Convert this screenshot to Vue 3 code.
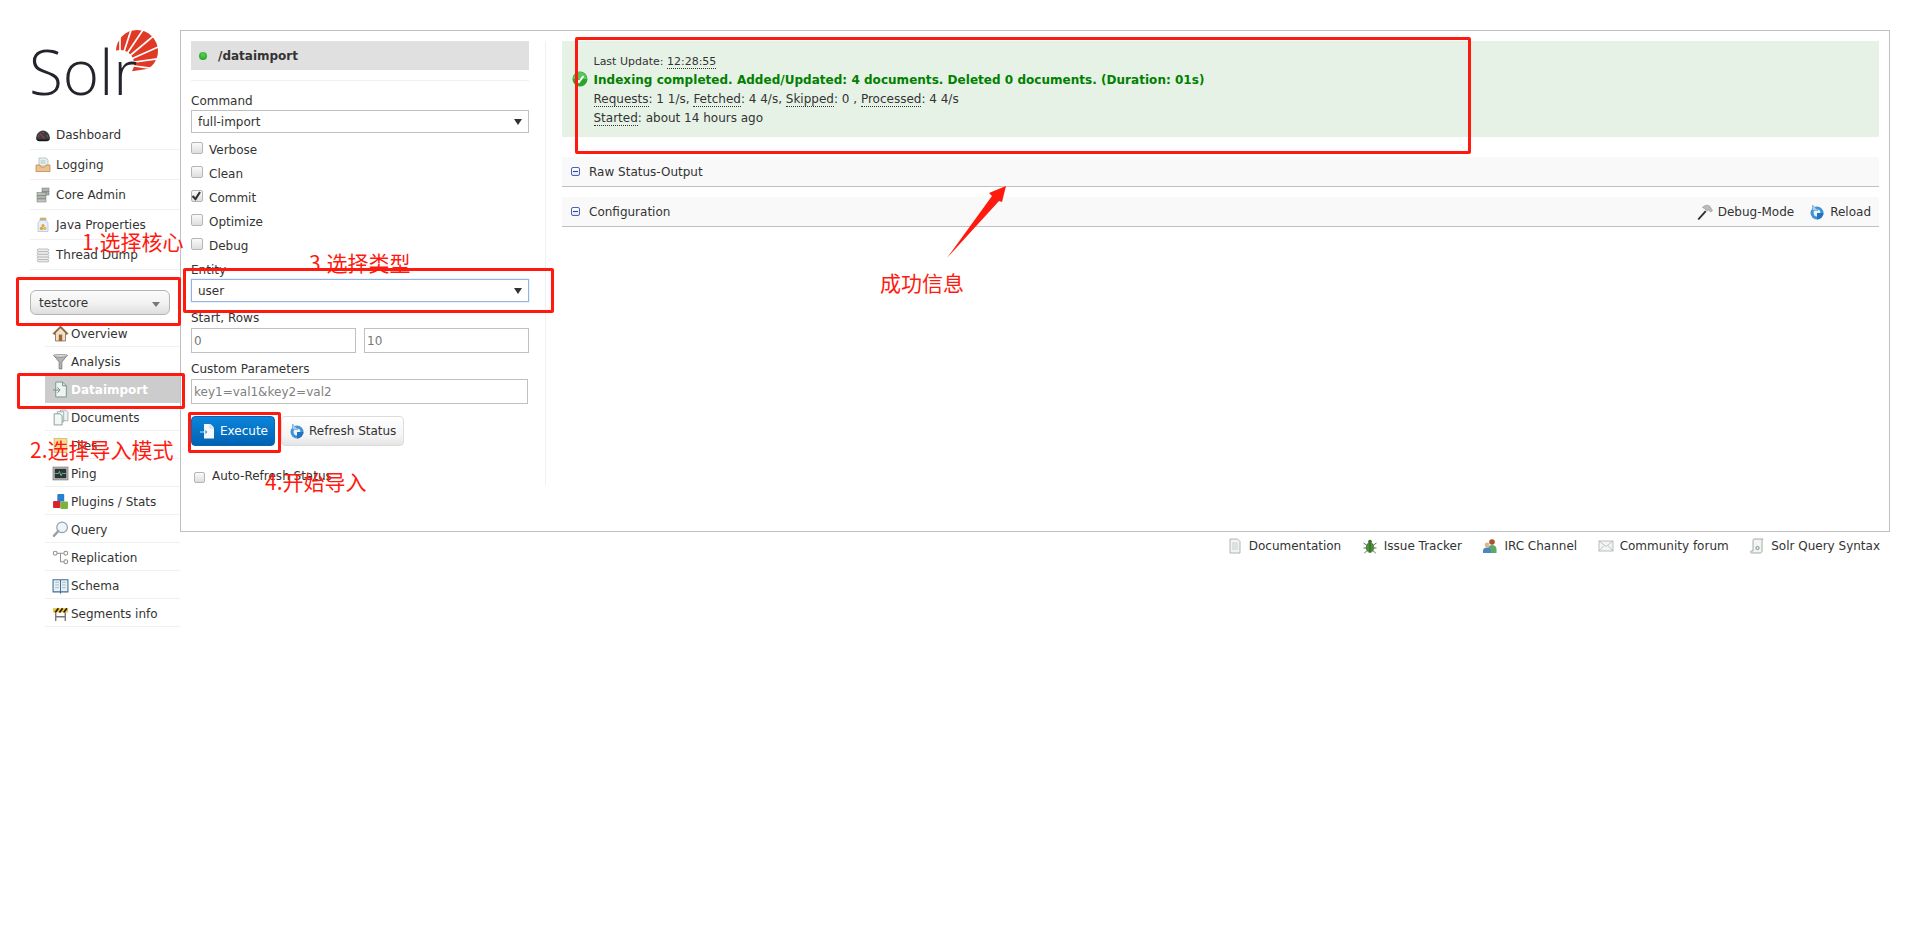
<script setup>
const icons = {
  dashboard: '<path d="M1 12.500C1 7 4 3.500 8 3.500s7 3.500 7 9l-2 1H3z" fill="#3a3d42"/><path d="M2 12.500h12v1l-2 .8H4l-2-.8z" fill="#17181b"/><path d="M4.500 6l5 5.500" stroke="#d8342c" stroke-width="1.100"/><path d="M3.200 9h1.200M8 5v1M12 9h1" stroke="#8d9096" stroke-width=".8"/>',
  logging: '<path d="M4 1h7l2 2v6H4z" fill="#e8f1ee" stroke="#9eb1ad" stroke-width=".7"/><path d="M5.500 4h5M5.500 6h5" stroke="#9db7b0" stroke-width=".8"/><path d="M1 8h4l1 2h4l1-2h4v6.500H1z" fill="#eec08c" stroke="#bd8a56" stroke-width=".8"/>',
  core: '<rect x="7" y="1" width="7" height="3.400" fill="#aab4ac" stroke="#70766f" stroke-width=".5"/><rect x="7" y="4.600" width="7" height="3.400" fill="#a0aca4" stroke="#70766f" stroke-width=".5"/><rect x="2" y="5.500" width="9" height="3" fill="#b9bfb8" stroke="#6f746e" stroke-width=".5"/><rect x="2" y="8.700" width="9" height="3" fill="#aeb5ae" stroke="#6f746e" stroke-width=".5"/><rect x="2" y="12" width="9" height="3" fill="#c0c5bf" stroke="#6f746e" stroke-width=".5"/>',
  java: '<rect x="5" y="1" width="6" height="2" rx=".6" fill="#e0b978" stroke="#b28a4a" stroke-width=".5"/><path d="M4.500 3.500h7L13 6v8.500H3V6z" fill="#e7f0f6" stroke="#a8c0d2" stroke-width=".7"/><circle cx="8" cy="8.600" r="1.600" fill="#dcaa4e"/><circle cx="6.400" cy="11.400" r="1.700" fill="#d9a446"/><circle cx="9.700" cy="11.400" r="1.700" fill="#e3b45e"/>',
  thread: '<path d="M3 2h10l1 1.200-1 1.400 1 1.300-1 1.400 1 1.300-1 1.400 1 1.300-1 1.400 1 1.300-1 .9H3l-1-1 1-1.300-1-1.300 1-1.400-1-1.300 1-1.400-1-1.300 1-1.400-1-1.300z" fill="#eceeec" stroke="#a3a7a3" stroke-width=".7"/><path d="M3 4.600h10M3 7.300h10M3 10h10M3 12.600h10" stroke="#a3a7a3" stroke-width=".8"/>',
  overview: '<path d="M8 1L1 8l1 1 1.300-1.200V15h9.400V7.800L14 9l1-1z" fill="#efe1c9" stroke="#8c6d4e" stroke-width=".8"/><path d="M8 1L1 8l1 1 6-6 6 6 1-1z" fill="#8e5a3a"/><rect x="6.400" y="9" width="3.200" height="6" fill="#a1652f"/>',
  analysis: '<path d="M1.500 2h13L9.300 8.500V15H6.700V8.500z" fill="#b0b3b0" stroke="#6f726f" stroke-width=".7"/><ellipse cx="8" cy="2.600" rx="6.500" ry="1.200" fill="#dcdedc" stroke="#777" stroke-width=".5"/>',
  dataimport: '<path d="M3.500 1h6.500L13.500 4.500V15H3.500z" fill="#edf3f1" stroke="#6f8b87" stroke-width=".8"/><path d="M1 8.500h6M5 6l2.600 2.500L5 11M10 1v3.500h3.500" fill="none" stroke="#6f8b87" stroke-width=".9"/>',
  documents: '<path d="M8 1h5l2 2v8H8z" fill="#eef3f2" stroke="#8aa09c" stroke-width=".7"/><path d="M5 2.500h6v9.500H5z" fill="#eef3f2" stroke="#8aa09c" stroke-width=".7"/><path d="M2 4.500h5.500l2 2V15H2z" fill="#f4f7f6" stroke="#7d9490" stroke-width=".8"/>',
  files: '<rect x="2" y="1.500" width="12" height="13" fill="#f9dd98" stroke="#d6b263" stroke-width=".8"/>',
  ping: '<rect x="1" y="2" width="14" height="12" fill="#d0d0d0" stroke="#666" stroke-width=".7"/><rect x="2.500" y="3.500" width="11" height="9" fill="#2d3232"/><path d="M3 8h3l1-2 1.500 4L10 7.500l.8.5H13" stroke="#6fd2a8" fill="none" stroke-width=".8"/>',
  plugins: '<rect x="5" y="1" width="6.500" height="7" rx=".8" fill="#2580d2"/><rect x="1" y="7.500" width="7" height="6.500" rx=".8" fill="#d7232d"/><rect x="8" y="8" width="7" height="7" rx=".8" fill="#78b33c"/>',
  query: '<circle cx="9.500" cy="6" r="5" fill="#eef4fb" stroke="#8ea0b4" stroke-width="1.100"/><path d="M5.800 9.600L1.800 14" stroke="#9e9e9e" stroke-width="2.200" stroke-linecap="round"/>',
  replication: '<circle cx="3" cy="4" r="1.800" fill="#fff" stroke="#8e9492"/><circle cx="13" cy="4" r="1.800" fill="#fff" stroke="#8e9492"/><circle cx="13" cy="12" r="1.800" fill="#fff" stroke="#8e9492"/><path d="M4.800 4h6.400M8 4v8h3.200" fill="none" stroke="#8e9492"/>',
  schema: '<path d="M1 2.500h6.500L8 3.500l.5-1H15V14H8.500L8 15l-.5-1H1z" fill="#e6f0f5" stroke="#3f6f95"/><path d="M3 5h3.500M3 7.500h3.500M3 10h3.500M9.500 5H13M9.500 7.500H13M9.500 10H13" stroke="#9cb5c4" stroke-width=".8"/><path d="M8 3v12" stroke="#3f6f95"/>',
  segments: '<rect x="1" y="3" width="14" height="4" fill="#f0c030"/><path d="M3 7l3-4M7 7l3-4M11 7l3-4" stroke="#222" stroke-width="1.600"/><path d="M3.500 7v8M12.500 7v8M3.500 11h9" stroke="#777" stroke-width="1.300" fill="none"/>',
  doc: '<path d="M3 1h7.500L13 3.500V15H3z" fill="#f2f4f3" stroke="#9ba5a3" stroke-width=".8"/><path d="M5 5h6M5 7h6M5 9h6M5 11h6" stroke="#bcc5c3" stroke-width=".8"/>',
  bug: '<ellipse cx="8" cy="9.500" rx="3.800" ry="5" fill="#4e8f3a" stroke="#2c5f20" stroke-width=".6"/><circle cx="8" cy="3.500" r="1.800" fill="#3a6e2b"/><path d="M8 5v9M4.500 7L1.500 5M4.200 10H1.500M4.800 13l-2.500 2M11.500 7l3-2M11.800 10h2.700M11.200 13l2.500 2" stroke="#2c4f20" stroke-width=".8"/>',
  irc: '<circle cx="10" cy="4" r="2.800" fill="#a8532e"/><path d="M6 15v-4c0-2.500 1.800-4 4-4s4.500 1.500 4.500 4v4z" fill="#5ea86a"/><circle cx="5" cy="7" r="2.400" fill="#e2b48c"/><path d="M1 15v-2.500C1 10.500 3 9.500 5 9.500s4 1 4 3V15z" fill="#4c86bd"/>',
  mail: '<rect x="1" y="3" width="14" height="10" fill="#f3f5f5" stroke="#aab0b0" stroke-width=".8"/><path d="M1 3l7 5.500L15 3M1 13l5-5.500M15 13l-5-5.500" fill="none" stroke="#aab0b0" stroke-width=".7"/>',
  script: '<path d="M5 1h9l-1 1.500V13c0 1.200-.8 2-2 2H2.500C1.500 15 1 14 2 13h2V2.500C4 1.500 4.500 1 5 1z" fill="#f3f5f0" stroke="#8c9a90" stroke-width=".8"/><circle cx="8.500" cy="10" r="1.600" fill="none" stroke="#60707c" stroke-width=".8"/>',
  hammer: '<path d="M.5 15l7.500-8.500 1.500 1.300L2 16z" fill="#33302c"/><path d="M5.500 3.500C7.500 1 11 .8 12.500 2L15.500 6.500l-2 1.500-2-2.300-1.300 1.300-2.500-2.300z" fill="#b9bcbf" stroke="#7d8184" stroke-width=".5"/>',
  reload: '<circle cx="8" cy="9" r="6.500" fill="#3f93d8"/><circle cx="8" cy="9" r="3.400" fill="#eaf4fb"/><path d="M8 9h6.500A6.500 6.500 0 0 1 8 15.500z" fill="#2474bd"/><path d="M3.500 1v5.500H9z" fill="#a9d1ef" stroke="#4b8fc7" stroke-width=".5"/>',
  exec: '<path d="M5 1h6.500L15 4.500V15.500H5z" fill="#f2f8fb"/><path d="M11 1V5h4" fill="none" stroke="#a7c6da" stroke-width=".8"/><path d="M1 9h6M5.200 6.800L7.500 9l-2.300 2.200" fill="none" stroke="#cfe4f2" stroke-width="1"/><path d="M6 9h2M6.400 7.400L8 9l-1.600 1.600" fill="none" stroke="#4c8fbf" stroke-width=".9"/>'
}
const mainNav = [['Dashboard','dashboard'],['Logging','logging'],['Core Admin','core'],['Java Properties','java'],['Thread Dump','thread']]
const coreNav = [['Overview','overview'],['Analysis','analysis'],['Dataimport','dataimport'],['Documents','documents'],['Files','files'],['Ping','ping'],['Plugins / Stats','plugins'],['Query','query'],['Replication','replication'],['Schema','schema'],['Segments info','segments']]
const checks = [['Verbose',false],['Clean',false],['Commit',true],['Optimize',false],['Debug',false]]
const links = [['Documentation','doc'],['Issue Tracker','bug'],['IRC Channel','irc'],['Community forum','mail'],['Solr Query Syntax','script']]
const rays = [-8,8,24,40,56,72,90]
</script>

<template>
  <div class="page">
    <aside class="side">
      <div class="logo">
        <svg class="sun" viewBox="0 0 44 44" width="44" height="44">
          <circle cx="22" cy="21" r="21" fill="#e03a26"/>
          <path d="M-4 44L-4 26 4 37 12 44z" fill="#fff"/>
          <path d="M0 44L44 37 44 44z" fill="#fff"/>
          <path d="M0 22L0 44 3 44z" fill="#fff"/>
          <line v-for="a in rays" :key="a" x1="5" y1="34"
            :x2="5 + 60 * Math.cos(a * Math.PI / 180)" :y2="34 - 60 * Math.sin(a * Math.PI / 180)"
            stroke="#fff" stroke-width="1.700"/>
          <circle cx="5" cy="34" r="14" fill="#fff"/>
        </svg>
        <span class="logo-text">Solr</span>
      </div>
      <nav class="main-nav">
        <a v-for="n in mainNav" :key="n[0]" class="nav-row">
          <svg class="ico" viewBox="0 0 16 16" v-html="icons[n[1]]"></svg>{{ n[0] }}
        </a>
      </nav>
      <div class="core-select"><span>testcore</span><i class="core-arrow"></i></div>
      <nav class="core-nav">
        <a v-for="n in coreNav" :key="n[0]" class="core-row" :class="{ active: n[0] === 'Dataimport' }">
          <svg class="ico" viewBox="0 0 16 16" v-html="icons[n[1]]"></svg>{{ n[0] }}
        </a>
      </nav>
    </aside>

    <div class="content">
      <main class="panel">
        <section class="form">
          <h2 class="head"><i class="dot"></i>/dataimport</h2>
          <div class="rule"></div>
          <label class="lab first">Command</label>
          <div class="sel"><select><option>full-import</option></select><i class="tri"></i></div>
          <div class="checks">
            <label v-for="c in checks" :key="c[0]" class="check">
              <span class="box">
                <svg v-if="c[1]" viewBox="0 0 12 12" width="12" height="12"><path d="M1.500 6L4.500 9l4.500-7" fill="none" stroke="#333" stroke-width="2.200"/></svg>
              </span>{{ c[0] }}
            </label>
          </div>
          <label class="lab entity">Entity</label>
          <div class="sel focus"><select><option>user</option></select><i class="tri"></i></div>
          <label class="lab">Start, Rows</label>
          <div class="pair"><input value="0"><input value="10"></div>
          <label class="lab">Custom Parameters</label>
          <input class="custom" placeholder="key1=val1&key2=val2">
          <div class="btns">
            <button class="btn exec"><svg class="ico" viewBox="0 0 16 16" v-html="icons.exec"></svg>Execute</button>
            <button class="btn refresh"><svg class="ico" viewBox="0 0 16 16" v-html="icons.reload"></svg>Refresh Status</button>
          </div>
          <label class="check auto"><span class="box"></span>Auto-Refresh Status</label>
        </section>

        <section class="right">
          <div class="status">
            <svg class="ok" viewBox="0 0 16 16" width="16" height="16">
              <circle cx="8" cy="8" r="7.500" fill="#2aa52a"/>
              <path d="M1 8a7 7 0 0 1 14 0z" fill="#5cc45c"/>
              <path d="M4.500 8.500L7 11l4.500-6" fill="none" stroke="#fff" stroke-width="2"/>
            </svg>
            <div class="l1">Last Update: <abbr>12:28:55</abbr></div>
            <div class="l2">Indexing completed. Added/Updated: 4 documents. Deleted 0 documents. (Duration: 01s)</div>
            <div class="l3"><abbr>Requests</abbr>: 1 1/s, <abbr>Fetched</abbr>: 4 4/s, <abbr>Skipped</abbr>: 0 , <abbr>Processed</abbr>: 4 4/s</div>
            <div class="l3"><abbr>Started</abbr>: about 14 hours ago</div>
          </div>
          <div class="block raw"><i class="minus"></i>Raw Status-Output</div>
          <div class="block cfg">
            <i class="minus"></i>Configuration
            <div class="tools">
              <a><svg class="ico" viewBox="0 0 16 16" v-html="icons.hammer"></svg>Debug-Mode</a>
              <a><svg class="ico" viewBox="0 0 16 16" v-html="icons.reload"></svg>Reload</a>
            </div>
          </div>
        </section>
      </main>
      <footer class="foot">
        <a v-for="l in links" :key="l[0]"><svg class="ico" viewBox="0 0 16 16" v-html="icons[l[1]]"></svg>{{ l[0] }}</a>
      </footer>
    </div>

    <!-- hand-drawn annotations lying over the screenshot -->
    <div class="mark m1"></div>
    <div class="mark m2"></div>
    <div class="mark m3"></div>
    <div class="mark m4"></div>
    <div class="mark m5"></div>
    <span class="note n1">1.选择核心</span>
    <span class="note n2">2.选择导入模式</span>
    <span class="note n3">3.选择类型</span>
    <span class="note n4">4.开始导入</span>
    <span class="note n5">成功信息</span>
    <svg class="arrow" viewBox="0 0 1920 943" width="1920" height="943">
      <polygon points="1006,186 989,193 992,196 947,258 999,201 1002,202" fill="#ff1a0f"/>
    </svg>
  </div>
</template>

<style>
html, body { margin: 0; background: #fff; }
</style>

<style scoped>
.page {
  position: relative;
  display: flex;
  width: 1920px;
  height: 943px;
  overflow: hidden;
  padding: 30px 30px 0;
  box-sizing: border-box;
  font: 12px/16px "DejaVu Sans", Verdana, sans-serif;
  color: #333;
  background: #fff;
}
a { color: #333; }
.ico { width: 16px; height: 16px; flex: none; }

.side { width: 150px; flex: none; }
.logo { position: relative; height: 90px; }
.logo-text {
  position: absolute;
  left: -1px;
  top: 6px;
  font: 300 62px/70px "Open Sans", sans-serif;
  color: #24242c;
}
.sun { position: absolute; left: 85px; top: 0; }
.nav-row {
  display: flex;
  align-items: center;
  gap: 5px;
  height: 29px;
  padding-left: 5px;
  border-bottom: 1px solid #f0f0f0;
}
.core-select {
  display: flex;
  align-items: center;
  justify-content: space-between;
  box-sizing: border-box;
  width: 140px;
  height: 25px;
  margin-top: 20px;
  padding: 0 9px 0 8px;
  border: 1px solid #b5b5b5;
  border-radius: 6px;
  background: linear-gradient(#fafafa, #f3f3f3 50%, #dedede);
}
.core-arrow { border: 4px solid transparent; border-top: 5px solid #777; border-bottom: 0; margin-top: 3px; }
.core-nav { margin: 4px 0 0 15px; }
.core-row {
  display: flex;
  align-items: center;
  gap: 2px;
  height: 25px;
  padding: 2px 0 0 7px;
  border-bottom: 1px solid #f0f0f0;
}
.core-row .ico { width: 17px; height: 17px; }
.core-row.active { background: #ccc; color: #fff; font-weight: 700; border-bottom-color: #ccc; }

.content { width: 1710px; flex: none; }
.panel {
  display: flex;
  box-sizing: border-box;
  height: 502px;
  padding: 10px 10px 0 10px;
  border: 1px solid #c0c0c0;
}
.form {
  box-sizing: content-box;
  width: 338px;
  height: 444px;
  padding-right: 16px;
  border-right: 1px solid #f0f0f0;
}
.head {
  display: flex;
  align-items: center;
  height: 29px;
  margin: 0;
  padding-left: 8px;
  background: #e0e0e0;
  font-size: 12px;
  font-weight: 700;
}
.dot {
  width: 8px;
  height: 8px;
  margin-right: 11px;
  border-radius: 50%;
  background: radial-gradient(circle at 50% 35%, #5ccf5c, #129a12);
}
.rule { height: 1px; margin-top: 10px; background: #f0f0f0; }
.lab { display: block; height: 20px; margin-top: 6px; line-height: 21px; }
.lab.first { margin-top: 10px; height: 19px; }
.lab.entity { margin-top: 2px; height: 19px; }
.sel { position: relative; height: 23px; }
.sel select {
  appearance: none;
  display: block;
  box-sizing: border-box;
  width: 100%;
  height: 23px;
  padding: 0 6px;
  border: 1px solid #c0c0c0;
  border-radius: 0;
  background: #fff;
  color: #333;
  font: inherit;
}
.sel.focus select { border-color: #8eb4e8; box-shadow: 0 0 1px #8eb4e8; }
.tri {
  position: absolute;
  right: 7px;
  top: 9px;
  border: 4px solid transparent;
  border-top: 6px solid #333;
  border-bottom: 0;
}
.checks { margin-top: 5px; }
.check { display: flex; align-items: center; height: 24px; }
.box {
  display: block;
  box-sizing: border-box;
  width: 12px;
  height: 12px;
  margin: -5px 6px 0 0;
  border: 1px solid #b5b5b5;
  border-radius: 2px;
  background: linear-gradient(#fafafa, #dedede);
}
.box svg { display: block; margin: -1px; }
.pair { display: flex; justify-content: space-between; }
input {
  box-sizing: border-box;
  height: 25px;
  padding: 0 2px;
  border: 1px solid #c0c0c0;
  color: #777;
  font: inherit;
  outline: 0;
}
input::placeholder { color: #808080; opacity: 1; }
.pair input { width: 165px; }
.custom { display: block; width: 337px; }
.btns { display: flex; gap: 6px; margin-top: 12px; }
.btn {
  display: flex;
  align-items: center;
  height: 30px;
  padding: 0;
  border-radius: 4px;
  font: inherit;
}
.exec {
  width: 84px;
  gap: 5px;
  padding-left: 7px;
  border: 1px solid #0468b8;
  background: linear-gradient(#0b85dc, #0062b2);
  color: #fff;
}
.refresh {
  width: 123px;
  gap: 4px;
  padding-left: 7px;
  border: 1px solid #ddd;
  background: linear-gradient(#fff, #f4f4f4 70%, #e4e4e4);
  color: #333;
}
.auto { margin: 18px 0 0 3px; height: 24px; }
.auto .box { width: 11px; height: 11px; margin: 2px 7px 0 0; }

.right { flex: 1; min-width: 0; margin-left: 16px; }
.status {
  position: relative;
  box-sizing: border-box;
  height: 96px;
  padding: 12px 0 0 31.500px;
  background: #e6f2e6;
  line-height: 19px;
}
.ok { position: absolute; left: 10px; top: 30px; }
.l1 { height: 18px; line-height: 18px; font-size: 11px; }
.l2 { font-weight: 700; color: #008000; letter-spacing: .03px; }
abbr { border-bottom: 1px dotted #333; }
.block {
  position: relative;
  display: flex;
  align-items: center;
  box-sizing: border-box;
  height: 30px;
  padding-left: 9px;
  background: #f9f9f9;
  border-bottom: 1px solid #c0c0c0;
}
.raw { margin-top: 20px; }
.cfg { margin-top: 10px; }
.minus {
  position: relative;
  box-sizing: border-box;
  width: 9px;
  height: 9px;
  margin-right: 9px;
  border: 1px solid #4a62b8;
  border-radius: 2px;
  background: linear-gradient(#fff, #dfe6fa);
}
.minus::after {
  content: "";
  position: absolute;
  left: 1px;
  right: 1px;
  top: 3px;
  height: 1px;
  background: #2a3f99;
}
.tools { display: flex; gap: 15px; margin-left: auto; padding-right: 8px; }
.tools a { display: flex; align-items: center; gap: 5px; }
.foot {
  display: flex;
  justify-content: flex-end;
  gap: 20.500px;
  margin-top: 6px;
  padding-right: 10px;
}
.foot a { display: flex; align-items: center; gap: 6px; height: 16px; }

.mark {
  position: absolute;
  box-sizing: border-box;
  border: 3px solid #ff1a0f;
  border-radius: 2px;
  pointer-events: none;
}
.m1 { left: 16px; top: 277px; width: 165px; height: 49px; }
.m2 { left: 17px; top: 373px; width: 168px; height: 36px; }
.m3 { left: 183px; top: 268px; width: 371px; height: 45px; }
.m4 { left: 188px; top: 412px; width: 93px; height: 41px; }
.m5 { left: 575px; top: 37px; width: 896px; height: 117px; }
.note {
  position: absolute;
  font: 21px/28px "Noto Sans CJK SC", sans-serif;
  color: #ff1a0f;
  white-space: nowrap;
}
.n1 { left: 82px; top: 227px; }
.n2 { left: 30px; top: 435px; }
.n3 { left: 309px; top: 248px; }
.n4 { left: 265px; top: 467px; }
.n5 { left: 880px; top: 268px; }
.arrow { position: absolute; left: 0; top: 0; pointer-events: none; }
</style>
